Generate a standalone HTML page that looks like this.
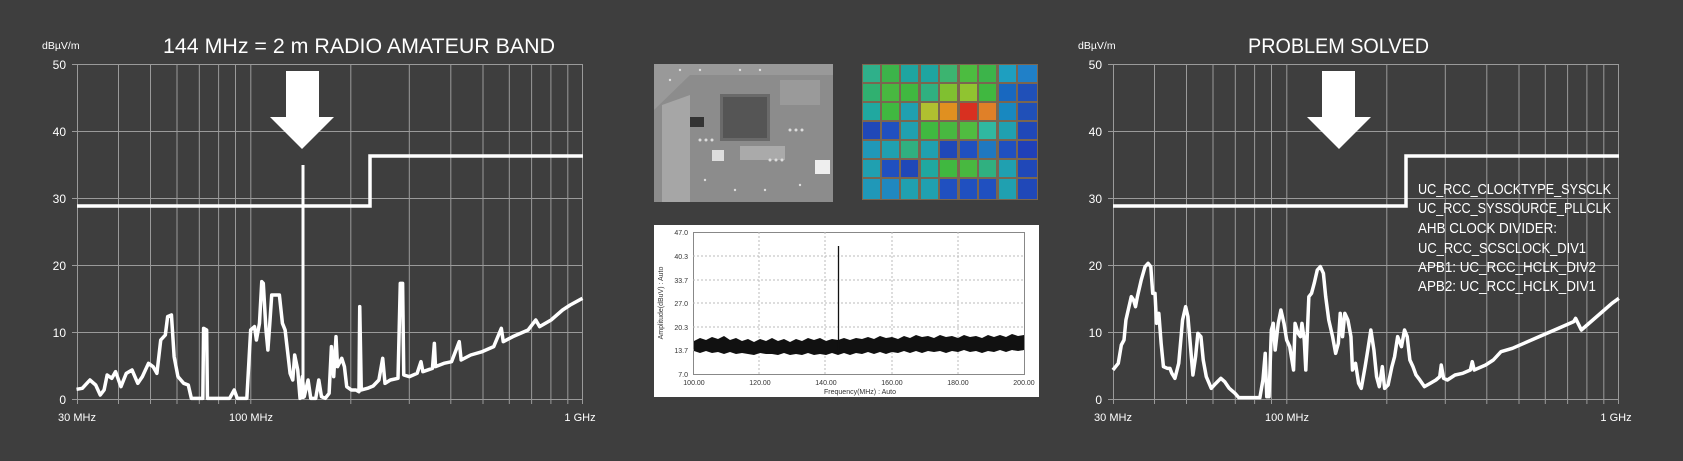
<!DOCTYPE html>
<html><head><meta charset="utf-8"><style>
html,body{margin:0;padding:0;background:#3e3e3e;}
svg{display:block;font-family:"Liberation Sans",sans-serif;}
</style></head><body>
<svg width="1683" height="461" viewBox="0 0 1683 461" xmlns="http://www.w3.org/2000/svg">
<rect width="1683" height="461" fill="#3e3e3e"/>
<defs>
<g id="grid">
 <g stroke="#9a9a9a" stroke-width="1">
  <line x1="77" y1="64.5" x2="583" y2="64.5"/><line x1="77" y1="131.5" x2="583" y2="131.5"/>
  <line x1="77" y1="198.5" x2="583" y2="198.5"/><line x1="77" y1="265.5" x2="583" y2="265.5"/>
  <line x1="77" y1="332.5" x2="583" y2="332.5"/><line x1="72" y1="399.5" x2="583" y2="399.5"/>
  <line x1="77.5" y1="64" x2="77.5" y2="404"/><line x1="118.5" y1="64" x2="118.5" y2="404"/>
  <line x1="150.5" y1="64" x2="150.5" y2="404"/><line x1="177" y1="64" x2="177" y2="404"/>
  <line x1="199.3" y1="64" x2="199.3" y2="404"/><line x1="218.6" y1="64" x2="218.6" y2="404"/>
  <line x1="235.5" y1="64" x2="235.5" y2="404"/><line x1="250.8" y1="64" x2="250.8" y2="404"/>
  <line x1="350.8" y1="64" x2="350.8" y2="404"/><line x1="409.3" y1="64" x2="409.3" y2="404"/>
  <line x1="450.8" y1="64" x2="450.8" y2="404"/><line x1="483" y1="64" x2="483" y2="404"/>
  <line x1="509.3" y1="64" x2="509.3" y2="404"/><line x1="531.6" y1="64" x2="531.6" y2="404"/>
  <line x1="550.9" y1="64" x2="550.9" y2="404"/><line x1="567.8" y1="64" x2="567.8" y2="404"/>
  <line x1="582.5" y1="64" x2="582.5" y2="404"/>
  <line x1="72" y1="64.5" x2="77" y2="64.5"/><line x1="72" y1="131.5" x2="77" y2="131.5"/>
  <line x1="72" y1="198.5" x2="77" y2="198.5"/><line x1="72" y1="265.5" x2="77" y2="265.5"/>
  <line x1="72" y1="332.5" x2="77" y2="332.5"/>
 </g>
 <g fill="#fff" font-size="12" text-anchor="end">
  <text x="66" y="69">50</text><text x="66" y="136">40</text><text x="66" y="203">30</text>
  <text x="66" y="270">20</text><text x="66" y="337">10</text><text x="66" y="404">0</text>
 </g>
 <g fill="#fff" font-size="11" text-anchor="middle">
  <text x="77" y="421">30 MHz</text><text x="251" y="421">100 MHz</text><text x="580" y="421">1 GHz</text>
 </g>
 <text x="42" y="49" fill="#fff" font-size="10.5">dBµV/m</text>
 <polyline points="77,206 370,206 370,156 583,156" fill="none" stroke="#fff" stroke-width="3.5"/>
</g>
</defs>

<!-- LEFT CHART -->
<use href="#grid"/>
<text x="163" y="53" fill="#fff" font-size="21" textLength="392" lengthAdjust="spacingAndGlyphs">144 MHz = 2 m RADIO AMATEUR BAND</text>
<polygon points="286,71 319,71 319,117 334,117 302,149 270,117 286,117" fill="#fff"/>
<line x1="303" y1="165" x2="303" y2="399" stroke="#fff" stroke-width="3"/>
<g transform="translate(0,30) scale(0.38270,0.33333)">
<polyline vector-effect="non-scaling-stroke" fill="none" stroke="#fff" stroke-width="3.5" stroke-linejoin="round" points="200,1078 215,1075 235,1050 250,1065 262,1095 272,1080 280,1035 292,1045 302,1025 316,1070 330,1030 345,1020 360,1060 372,1040 388,1000 400,1010 410,1030 420,930 432,915 438,860 448,855 455,980 465,1040 480,1060 492,1065 500,1105 530,1105 532,895 540,900 542,1105 600,1105 612,1080 620,1105 645,1105 655,900 665,890 670,930 678,880 684,755 688,760 695,900 700,960 705,880 710,795 730,795 738,880 745,900 750,950 758,1030 765,1050 770,975 778,1020 784,1105 790,1040 795,1100 805,1050 812,1105 825,1105 833,1050 840,1100 850,1105 860,1090 866,950 872,1040 878,920 882,1010 893,985 900,1010 906,1070 918,1080 930,1080 938,1085 940,830 944,1080 960,1075 975,1068 990,1050 1000,985 1006,1060 1020,1050 1040,1045 1046,760 1052,760 1055,1035 1070,1040 1090,1030 1100,995 1105,1025 1130,1015 1135,940 1138,1010 1160,1000 1180,995 1200,935 1205,990 1230,975 1260,965 1290,950 1310,895 1315,935 1340,920 1380,900 1400,870 1410,890 1440,870 1470,840 1490,825 1522,805"/>
</g>

<!-- RIGHT CHART -->
<use href="#grid" x="1036"/>
<text x="1248" y="53" fill="#fff" font-size="21" textLength="181" lengthAdjust="spacingAndGlyphs">PROBLEM SOLVED</text>
<polygon points="1322,71 1355,71 1355,117 1371,117 1339,149 1307,117 1322,117" fill="#fff"/>
<g transform="translate(1080,30) scale(0.38270,0.33333)">
<polyline vector-effect="non-scaling-stroke" fill="none" stroke="#fff" stroke-width="3.5" stroke-linejoin="round" points="86,1020 100,1000 108,945 115,930 120,870 128,830 134,800 140,810 145,830 150,800 160,750 170,710 178,700 185,710 190,790 196,790 200,880 206,850 212,940 218,1010 228,1015 235,1015 240,1030 248,1045 258,1000 268,870 276,830 282,860 288,940 295,1035 302,980 308,910 316,920 322,990 330,1040 343,1075 355,1060 368,1045 378,1055 390,1075 405,1090 415,1103 470,1103 478,1050 484,970 488,1100 494,1100 500,900 505,880 510,960 518,880 525,840 533,880 540,930 548,950 558,1020 562,880 570,910 576,920 580,880 586,930 590,1020 598,800 605,790 612,760 620,720 628,710 636,730 642,800 650,870 660,920 668,970 675,940 680,850 686,920 692,850 700,870 708,920 712,1020 720,1000 728,1060 735,1075 745,1010 752,960 760,900 768,960 775,1040 782,1070 790,1010 796,1075 805,1065 815,1010 822,980 830,920 840,950 848,900 855,920 862,990 870,1010 878,1035 888,1050 900,1070 915,1060 930,1050 940,1040 944,1005 950,1045 960,1050 980,1035 1000,1030 1020,1020 1025,995 1030,1020 1060,1005 1080,990 1100,965 1130,955 1160,940 1200,920 1240,900 1270,885 1290,875 1295,865 1310,900 1340,870 1370,840 1390,820 1408,805"/>
</g>
<g fill="#fff" font-size="14.5">
 <text x="1418" y="194" textLength="193" lengthAdjust="spacingAndGlyphs">UC_RCC_CLOCKTYPE_SYSCLK</text>
 <text x="1418" y="213" textLength="193" lengthAdjust="spacingAndGlyphs">UC_RCC_SYSSOURCE_PLLCLK</text>
 <text x="1418" y="233" textLength="139" lengthAdjust="spacingAndGlyphs">AHB CLOCK DIVIDER:</text>
 <text x="1418" y="253" textLength="168" lengthAdjust="spacingAndGlyphs">UC_RCC_SCSCLOCK_DIV1</text>
 <text x="1418" y="272" textLength="178" lengthAdjust="spacingAndGlyphs">APB1: UC_RCC_HCLK_DIV2</text>
 <text x="1418" y="291" textLength="178" lengthAdjust="spacingAndGlyphs">APB2: UC_RCC_HCLK_DIV1</text>
</g>

<!-- PCB PHOTO -->
<rect x="654" y="64" width="179" height="138" fill="#8c8c8c"/>
<polygon points="654,110 690,75 833,75 833,64 654,64" fill="#999"/>
<polygon points="662,105 690,95 690,202 662,202" fill="#a6a6a6"/>
<rect x="720" y="94" width="50" height="47" fill="#6a6a6a"/>
<rect x="723" y="97" width="44" height="41" fill="#555"/>
<rect x="690" y="117" width="14" height="10" fill="#333"/>
<rect x="712" y="150" width="12" height="11" fill="#ddd"/>
<rect x="815" y="160" width="15" height="14" fill="#eee"/>
<rect x="740" y="146" width="45" height="14" fill="#aaa"/>
<rect x="780" y="80" width="40" height="25" fill="#9a9a9a"/>
<g fill="#ddd">
 <circle cx="700" cy="140" r="1.5"/><circle cx="706" cy="140" r="1.5"/><circle cx="712" cy="140" r="1.5"/>
 <circle cx="770" cy="160" r="1.5"/><circle cx="776" cy="160" r="1.5"/><circle cx="782" cy="160" r="1.5"/>
 <circle cx="790" cy="130" r="1.5"/><circle cx="796" cy="130" r="1.5"/><circle cx="802" cy="130" r="1.5"/>
 <circle cx="670" cy="80" r="1.2"/><circle cx="680" cy="70" r="1.2"/><circle cx="700" cy="70" r="1.2"/>
 <circle cx="740" cy="70" r="1.2"/><circle cx="760" cy="70" r="1.2"/><circle cx="800" cy="185" r="1.2"/>
 <circle cx="735" cy="190" r="1.2"/><circle cx="765" cy="190" r="1.2"/><circle cx="705" cy="180" r="1.2"/>
</g>

<!-- HEATMAP -->
<rect x="862" y="64" width="176" height="136" fill="#7a6650"/>
<g id="hm"></g>
<g>
<!-- rows of 9 cells, cell ~19.5 x 19.4 -->
<g fill="#2fa89a"><rect x="863" y="65" width="17" height="17" fill="#2fb08a"/><rect x="882" y="65" width="17" height="17" fill="#3cb44a"/><rect x="901" y="65" width="17" height="17" fill="#1ea5a0"/><rect x="921" y="65" width="17" height="17" fill="#1ea5a0"/><rect x="940" y="65" width="17" height="17" fill="#3cb470"/><rect x="960" y="65" width="17" height="17" fill="#4cbc40"/><rect x="979" y="65" width="17" height="17" fill="#3cb44a"/><rect x="999" y="65" width="17" height="17" fill="#1e9fc0"/><rect x="1018" y="65" width="19" height="17" fill="#2080c8"/></g>
<g><rect x="863" y="84" width="17" height="17" fill="#30b070"/><rect x="882" y="84" width="17" height="17" fill="#48b840"/><rect x="901" y="84" width="17" height="17" fill="#40b840"/><rect x="921" y="84" width="17" height="17" fill="#30b080"/><rect x="940" y="84" width="17" height="17" fill="#80c030"/><rect x="960" y="84" width="17" height="17" fill="#90c430"/><rect x="979" y="84" width="17" height="17" fill="#40b840"/><rect x="999" y="84" width="17" height="17" fill="#1868c0"/><rect x="1018" y="84" width="19" height="17" fill="#2050b8"/></g>
<g><rect x="863" y="103" width="17" height="17" fill="#20a8a0"/><rect x="882" y="103" width="17" height="17" fill="#40b840"/><rect x="901" y="103" width="17" height="17" fill="#20a0b0"/><rect x="921" y="103" width="17" height="17" fill="#b0c030"/><rect x="940" y="103" width="17" height="17" fill="#e09020"/><rect x="960" y="103" width="17" height="17" fill="#d83020"/><rect x="979" y="103" width="17" height="17" fill="#e08028"/><rect x="999" y="103" width="17" height="17" fill="#1888c0"/><rect x="1018" y="103" width="19" height="17" fill="#2050b8"/></g>
<g><rect x="863" y="122" width="17" height="17" fill="#2048b8"/><rect x="882" y="122" width="17" height="17" fill="#2050c0"/><rect x="901" y="122" width="17" height="17" fill="#20a0b0"/><rect x="921" y="122" width="17" height="17" fill="#40b840"/><rect x="940" y="122" width="17" height="17" fill="#48b840"/><rect x="960" y="122" width="17" height="17" fill="#50bc40"/><rect x="979" y="122" width="17" height="17" fill="#30b8a0"/><rect x="999" y="122" width="17" height="17" fill="#20a0b0"/><rect x="1018" y="122" width="19" height="17" fill="#2048b8"/></g>
<g><rect x="863" y="141" width="17" height="17" fill="#2098b8"/><rect x="882" y="141" width="17" height="17" fill="#20a0b0"/><rect x="901" y="141" width="17" height="17" fill="#30b080"/><rect x="921" y="141" width="17" height="17" fill="#20a0b0"/><rect x="940" y="141" width="17" height="17" fill="#2048b8"/><rect x="960" y="141" width="17" height="17" fill="#2050c0"/><rect x="979" y="141" width="17" height="17" fill="#2078c0"/><rect x="999" y="141" width="17" height="17" fill="#2050c0"/><rect x="1018" y="141" width="19" height="17" fill="#2040b8"/></g>
<g><rect x="863" y="160" width="17" height="17" fill="#20a0b0"/><rect x="882" y="160" width="17" height="17" fill="#2050c0"/><rect x="901" y="160" width="17" height="17" fill="#2048b8"/><rect x="921" y="160" width="17" height="17" fill="#20a8a0"/><rect x="940" y="160" width="17" height="17" fill="#40b840"/><rect x="960" y="160" width="17" height="17" fill="#48b840"/><rect x="979" y="160" width="17" height="17" fill="#30b080"/><rect x="999" y="160" width="17" height="17" fill="#20a0b0"/><rect x="1018" y="160" width="19" height="17" fill="#2048b8"/></g>
<g><rect x="863" y="179" width="17" height="20" fill="#2098b8"/><rect x="882" y="179" width="17" height="20" fill="#2088c0"/><rect x="901" y="179" width="17" height="20" fill="#20a0b0"/><rect x="921" y="179" width="17" height="20" fill="#20a0b0"/><rect x="940" y="179" width="17" height="20" fill="#2050c0"/><rect x="960" y="179" width="17" height="20" fill="#2050c0"/><rect x="979" y="179" width="17" height="20" fill="#2050c0"/><rect x="999" y="179" width="17" height="20" fill="#20a0b0"/><rect x="1018" y="179" width="19" height="20" fill="#2048b8"/></g>
</g>

<!-- SPECTRUM ANALYZER -->
<rect x="654" y="225" width="385" height="172" fill="#fff"/>
<rect x="693.5" y="232.5" width="331" height="142" fill="none" stroke="#888" stroke-width="1"/>
<g stroke="#bbb" stroke-width="1" stroke-dasharray="2,2">
 <line x1="693" y1="256" x2="1024" y2="256"/><line x1="693" y1="280" x2="1024" y2="280"/>
 <line x1="693" y1="303" x2="1024" y2="303"/><line x1="693" y1="327" x2="1024" y2="327"/>
 <line x1="693" y1="350" x2="1024" y2="350"/>
 <line x1="759" y1="232" x2="759" y2="374"/><line x1="825" y1="232" x2="825" y2="374"/>
 <line x1="892" y1="232" x2="892" y2="374"/><line x1="958" y1="232" x2="958" y2="374"/>
</g>
<path d="M694,341 L700,338 706,340 712,337 718,339 724,336 730,340 736,338 742,341 748,339 754,342 760,339 766,341 772,338 778,341 784,339 790,342 796,339 802,341 808,338 814,340 820,338 826,341 832,339 838,340 844,338 850,340 856,338 862,339 868,337 874,339 880,336 886,338 892,337 898,339 904,336 910,338 916,335 922,337 928,336 934,338 940,335 946,337 952,336 958,338 964,335 970,337 976,336 982,338 988,335 994,337 1000,335 1006,337 1012,334 1018,336 1024,335 L1024,350 1018,351 1012,350 1006,352 1000,350 994,352 988,351 982,353 976,351 970,352 964,350 958,352 952,351 946,353 940,351 934,352 928,351 922,353 916,351 910,353 904,351 898,353 892,352 886,354 880,352 874,354 868,352 862,354 856,353 850,355 844,353 838,355 832,353 826,355 820,354 814,355 808,353 802,355 796,354 790,355 784,353 778,355 772,354 766,354 760,353 754,355 748,354 742,353 736,354 730,352 724,354 718,352 712,353 706,351 700,353 694,351 Z" fill="#111"/>
<line x1="838.5" y1="246" x2="838.5" y2="350" stroke="#111" stroke-width="1.3"/>
<g font-size="7" fill="#333" text-anchor="end">
 <text x="688" y="235">47.0</text><text x="688" y="259">40.3</text><text x="688" y="283">33.7</text>
 <text x="688" y="306">27.0</text><text x="688" y="330">20.3</text><text x="688" y="353">13.7</text><text x="688" y="377">7.0</text>
</g>
<g font-size="7" fill="#333" text-anchor="middle">
 <text x="694" y="385">100.00</text><text x="760" y="385">120.00</text><text x="826" y="385">140.00</text>
 <text x="892" y="385">160.00</text><text x="958" y="385">180.00</text><text x="1024" y="385">200.00</text>
 <text x="860" y="394">Frequency(MHz) : Auto</text>
 <text transform="translate(663,303) rotate(-90)">Amplitude(dBuV) : Auto</text>
</g>
</svg>
</body></html>
